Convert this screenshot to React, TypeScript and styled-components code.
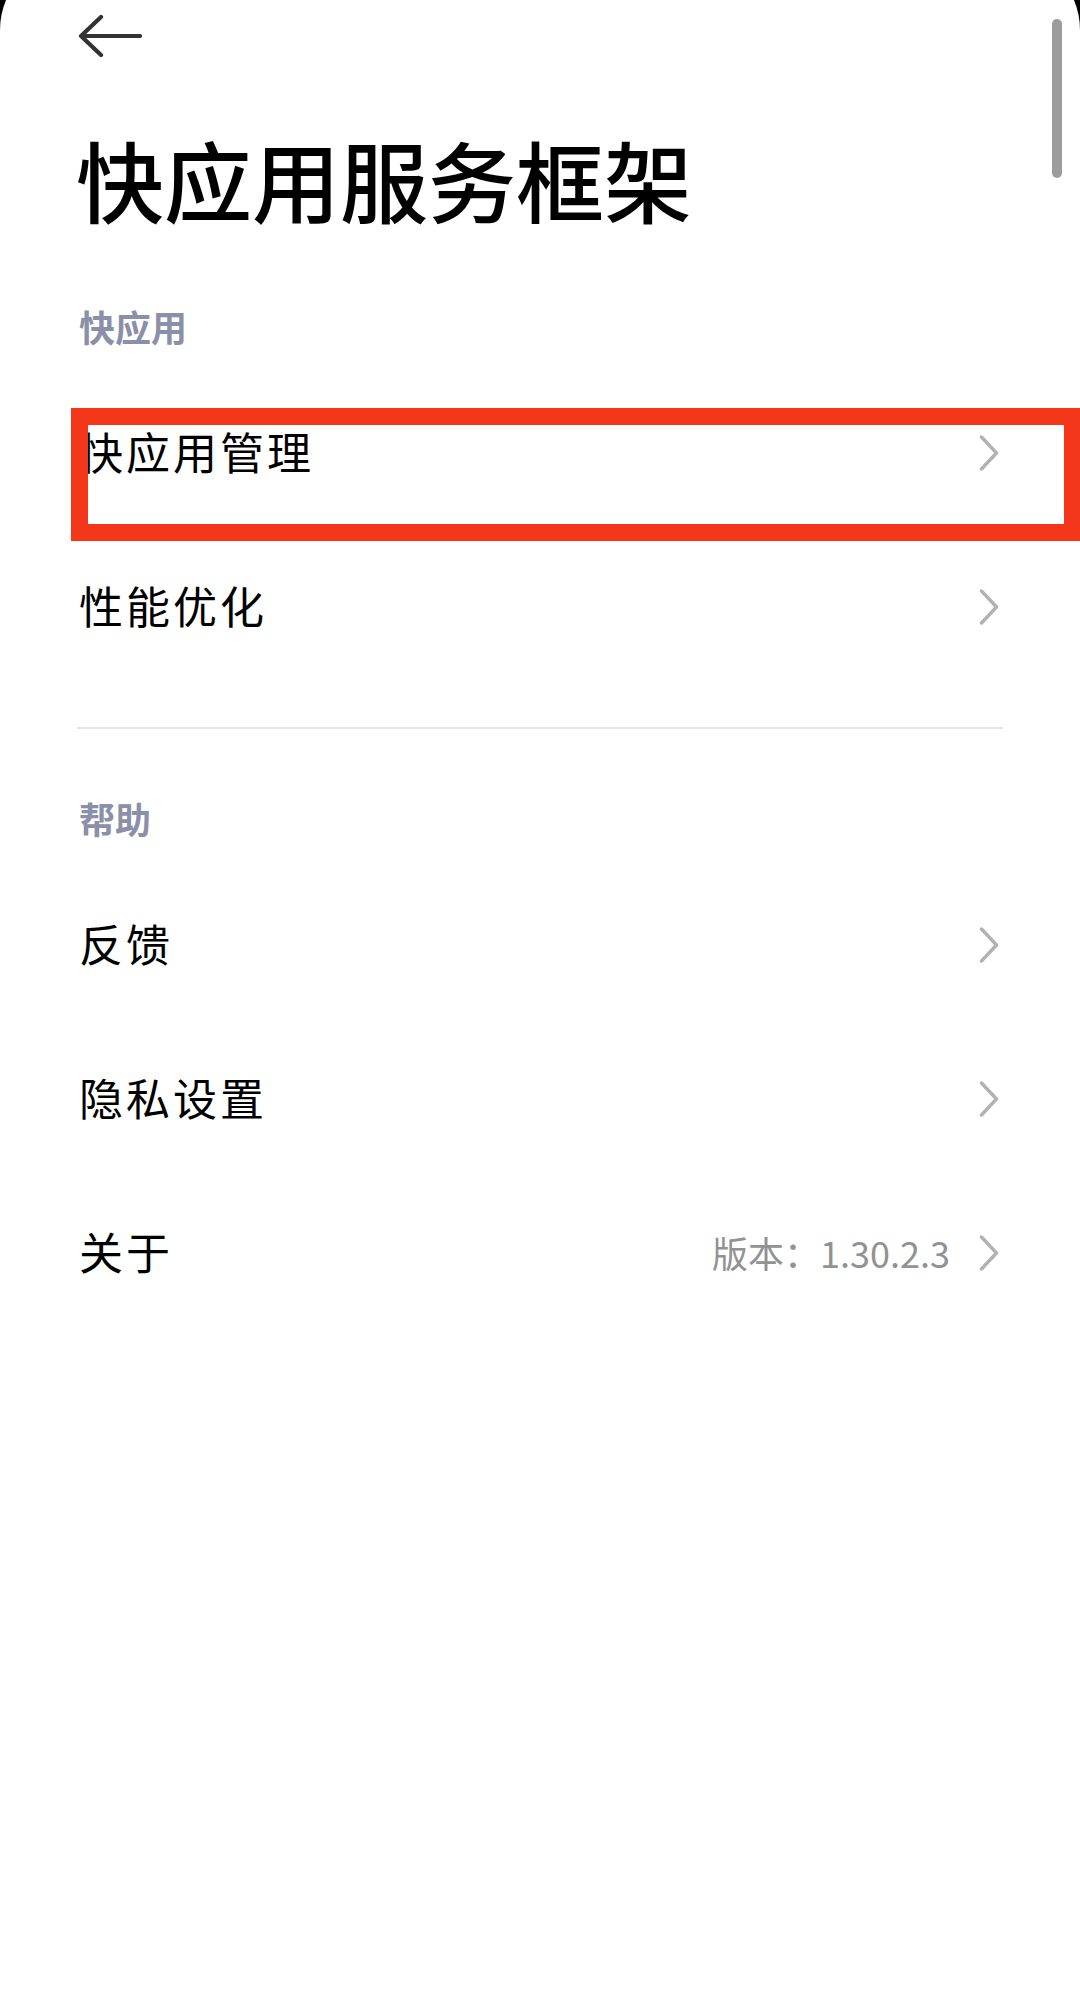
import React from "react";
import styled, { createGlobalStyle } from "styled-components";

const Global = createGlobalStyle`
  html, body {
    margin: 0;
    padding: 0;
    background: #000;
  }
  body {
    font-family: "Noto Sans CJK SC", "Noto Sans", sans-serif;
    -webkit-font-smoothing: antialiased;
  }
`;

const Root = styled.div`
  position: relative;
  width: 1080px;
  min-height: 2004px;
  overflow: hidden;
`;

const Screen = styled.div`
  margin-top: -48px;
  padding-top: 48px;
  min-height: calc(2004px + 48px);
  box-sizing: border-box;
  background: #fff;
  border-radius: 78px 78px 0 0;
`;

const ScrollThumb = styled.div`
  position: absolute;
  top: 19px;
  right: 18px;
  width: 10px;
  height: 159px;
  border-radius: 5px;
  background: #9c9c9c;
`;

const TopBar = styled.div`
  height: 72px;
  display: flex;
  align-items: center;
  padding-left: 78px;
`;

const BackButton = styled.button`
  border: 0;
  padding: 0;
  background: transparent;
  display: flex;
  align-items: center;
  cursor: pointer;
`;

const Title = styled.h1`
  margin: 62px 0 58px;
  padding-left: 76px;
  font-size: 88px;
  line-height: 88px;
  font-weight: 500;
  color: #000;
  letter-spacing: 0;
`;

const SectionHeader = styled.div`
  height: 96px;
  box-sizing: border-box;
  padding: 0 0 4px 79px;
  display: flex;
  align-items: center;
  font-size: 36px;
  font-weight: 700;
  color: #8b90a9;
`;

const Row = styled.div`
  position: relative;
  height: 154px;
  display: flex;
  align-items: center;
  justify-content: space-between;
  padding: 0 81px 0 79px;
`;

const Label = styled.span`
  font-size: 44px;
  letter-spacing: 3px;
  color: #000;
  padding-bottom: 4px;
`;

const Trail = styled.div`
  display: flex;
  align-items: center;
  gap: 29px;
`;

const Value = styled.span`
  font-size: 36px;
  color: #929292;
  padding-bottom: 3px;
`;

const Divider = styled.div`
  height: 88px;
  display: flex;
  align-items: center;
  padding: 0 77px;
  &::after {
    content: "";
    flex: 1;
    height: 2px;
    background: #e6e6e6;
  }
`;

const Highlight = styled.div`
  position: absolute;
  top: 32px;
  left: 71px;
  right: 0;
  height: 133px;
  box-sizing: border-box;
  border: 17px solid #f4361b;
  border-right-width: 16px;
  pointer-events: none;
`;

const Chevron = () => (
  <svg width="20" height="36" viewBox="0 0 20 36" fill="none">
    <polyline
      points="2.5,2 17.5,18 2.5,34"
      stroke="#b2b2b2"
      strokeWidth="3.4"
      strokeLinecap="round"
      strokeLinejoin="round"
    />
  </svg>
);

const BackArrow = () => (
  <svg width="64" height="44" viewBox="0 0 64 44" fill="none">
    <path
      d="M23 3 L3 22 L23 41 M3 22 H62"
      stroke="#333"
      strokeWidth="4.2"
      strokeLinecap="round"
      strokeLinejoin="round"
    />
  </svg>
);

type Item = { label: string; value?: string; marked?: boolean };

const ListRow = ({ label, value, marked }: Item) => (
  <Row>
    <Label>{label}</Label>
    <Trail>
      {value && <Value>{value}</Value>}
      <Chevron />
    </Trail>
    {marked && <Highlight />}
  </Row>
);

export default function App() {
  return (
    <Root>
      <Global />
      <Screen>
        <TopBar>
          <BackButton aria-label="返回">
            <BackArrow />
          </BackButton>
        </TopBar>
        <Title>快应用服务框架</Title>
        <SectionHeader>快应用</SectionHeader>
        <ListRow label="快应用管理" marked />
        <ListRow label="性能优化" />
        <Divider />
        <SectionHeader>帮助</SectionHeader>
        <ListRow label="反馈" />
        <ListRow label="隐私设置" />
        <ListRow label="关于" value="版本：1.30.2.3" />
      </Screen>
      <ScrollThumb />
    </Root>
  );
}
